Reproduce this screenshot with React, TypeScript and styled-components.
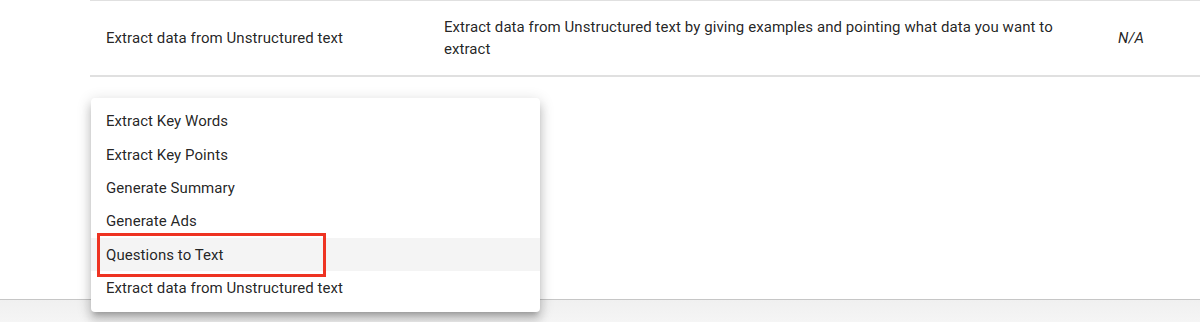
import React from "react";
import styled, { createGlobalStyle } from "styled-components";

const GlobalStyle = createGlobalStyle`
  html, body {
    margin: 0;
    padding: 0;
    background: #ffffff;
    font-family: Roboto, "Liberation Sans", sans-serif;
    color: rgba(0, 0, 0, 0.87);
    letter-spacing: 0.07px;
  }
`;

const Page = styled.div`
  position: relative;
  width: 1200px;
  height: 322px;
  overflow: hidden;
  display: flex;
  flex-direction: column;
`;

const TableArea = styled.div`
  flex: 1;
  padding-left: 90px;
`;

const Row = styled.div`
  display: grid;
  grid-template-columns: 338px 1fr 130px;
  align-items: center;
  height: 74px;
  border-top: 1px solid #e0e0e0;
  border-bottom: 2px solid #e0e0e0;
  font-size: 15px;
  line-height: 22px;
`;

const Cell = styled.div<{ $italic?: boolean; $center?: boolean }>`
  padding: 0 16px;
  font-style: ${(p) => (p.$italic ? "italic" : "normal")};
  text-align: ${(p) => (p.$center ? "center" : "left")};
  padding-right: ${(p) => (p.$center ? "24px" : "16px")};
`;

const Description = styled(Cell)`
  max-width: 616px;
  padding-bottom: 1px;
`;

const BottomBar = styled.div`
  height: 22px;
  border-top: 1px solid #c6c6c6;
  background: linear-gradient(#f0f0f0, #f5f5f5);
`;

const Menu = styled.ul`
  position: absolute;
  left: 91px;
  top: 98px;
  width: 449px;
  margin: 0;
  padding: 6.5px 0 7.5px;
  list-style: none;
  background: #ffffff;
  border-radius: 4px;
  box-shadow: 0 5px 5px -3px rgba(0, 0, 0, 0.2), 0 8px 10px 1px rgba(0, 0, 0, 0.14),
    0 3px 14px 2px rgba(0, 0, 0, 0.12);
`;

const MenuItem = styled.li<{ $active?: boolean }>`
  position: relative;
  display: flex;
  align-items: center;
  height: 33.4px;
  padding: 0 15px;
  font-size: 15px;
  background: ${(p) => (p.$active ? "#f4f4f4" : "transparent")};
`;

const Highlight = styled.span`
  position: absolute;
  left: 6px;
  top: -5px;
  width: 229px;
  height: 44px;
  box-sizing: border-box;
  border: 3px solid #ee3322;
  pointer-events: none;
`;

const options = [
  "Extract Key Words",
  "Extract Key Points",
  "Generate Summary",
  "Generate Ads",
  "Questions to Text",
  "Extract data from Unstructured text",
];

export default function App() {
  return (
    <Page>
      <GlobalStyle />
      <TableArea>
        <Row>
          <Cell>Extract data from Unstructured text</Cell>
          <Description>
            Extract data from Unstructured text by giving examples and pointing what data you want to
            extract
          </Description>
          <Cell $italic $center>N/A</Cell>
        </Row>
      </TableArea>
      <BottomBar />
      <Menu>
        {options.map((o) => (
          <MenuItem key={o} $active={o === "Questions to Text"}>
            {o}
            {o === "Questions to Text" && <Highlight />}
          </MenuItem>
        ))}
      </Menu>
    </Page>
  );
}
